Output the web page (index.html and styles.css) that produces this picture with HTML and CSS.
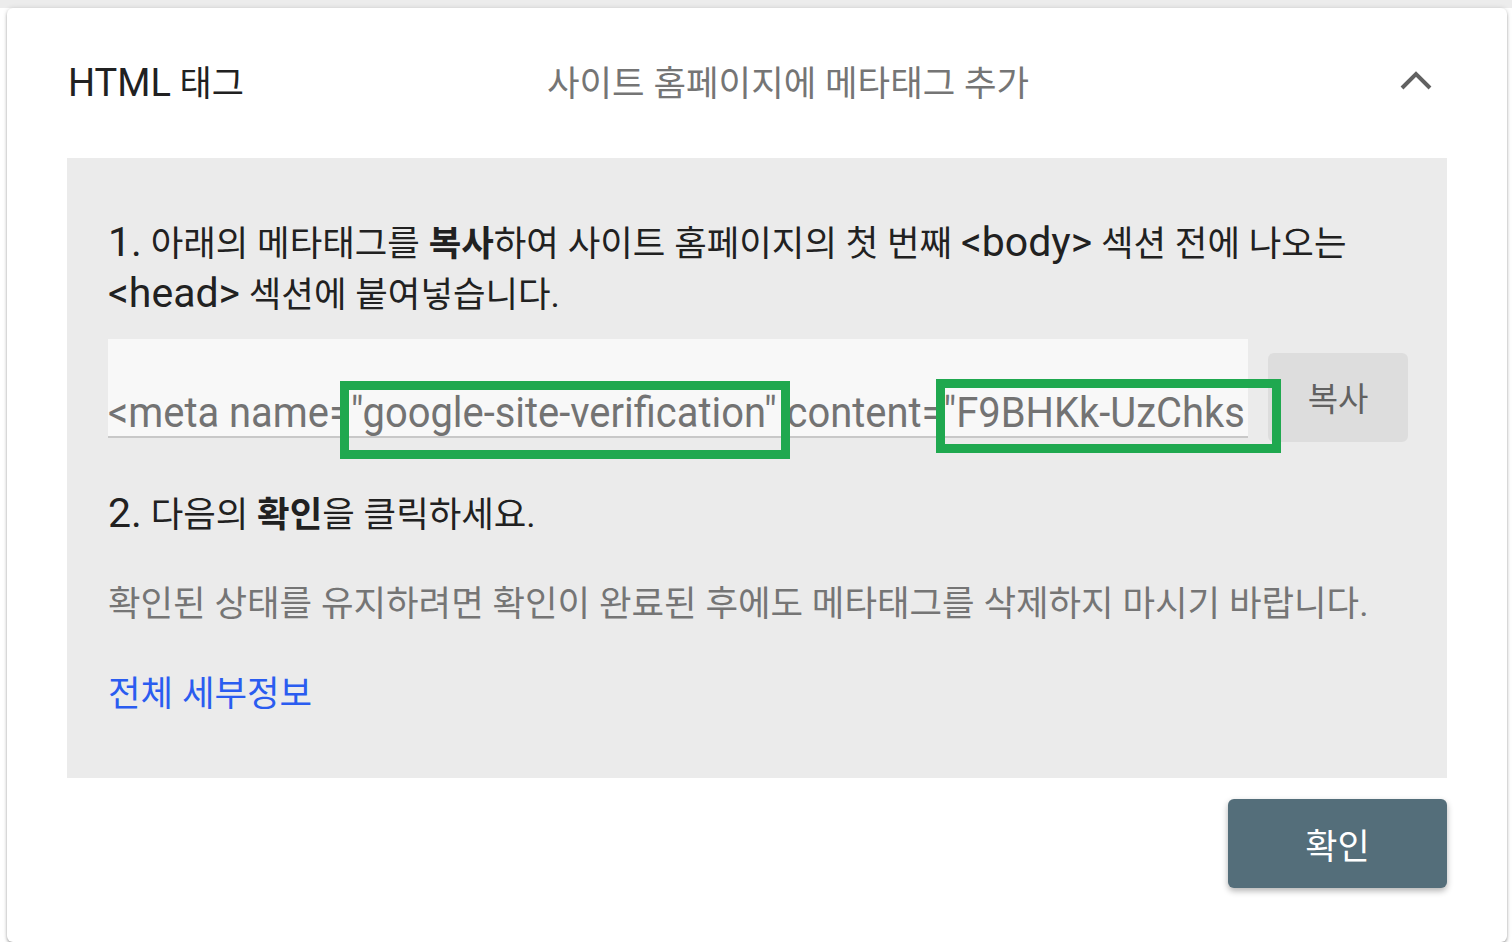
FILE: index.html
```html
<!DOCTYPE html>
<html lang="ko">
<head>
  <meta charset="UTF-8" />
  <meta name="viewport" content="width=device-width, initial-scale=1.0"/>
  <title>HTML 태그 - 소유권 확인</title>
  <link rel="stylesheet" href="styles.css">
</head>
<body>

<div class="card">
  <div class="card-head">
    <h2 class="title"><span class="lat">HTML</span> 태그</h2>
    <div class="subtitle">사이트 홈페이지에 메타태그 추가</div>
    <svg class="chevron" width="32" height="20" viewBox="0 0 32 20">
      <polyline points="2,17 16,3 30,17" fill="none" stroke="#616161" stroke-width="4" />
    </svg>
  </div>

  <div class="panel">
    <p class="step"><span class="lat">1.</span> 아래의 메타태그를 <b>복사</b>하여 사이트 홈페이지의 첫 번째 <span class="lat">&lt;body&gt;</span> 섹션 전에 나오는 <span class="lat">&lt;head&gt;</span> 섹션에 붙여넣습니다.</p>

    <div class="code-row">
      <div class="code-field">
        <span class="code-text">&lt;meta name="google-site-verification" content="F9BHKk-UzChks</span>
      </div>
      <button class="copy-btn">복사</button>
      <div class="mark mark-name"></div>
      <div class="mark mark-content"></div>
    </div>

    <p class="step step-two"><span class="lat">2.</span> 다음의 <b>확인</b>을 클릭하세요.</p>
    <p class="note">확인된 상태를 유지하려면 확인이 완료된 후에도 메타태그를 삭제하지 마시기 바랍니다.</p>
    <a class="more" href="#">전체 세부정보</a>
  </div>

  <div class="card-foot">
    <button class="confirm">확인</button>
  </div>
</div>

</body>
</html>
```

FILE: styles.css
```css
body {
  margin: 0;
  font-family: Roboto, "Noto Sans CJK KR", sans-serif;
  background: linear-gradient(#ececec, #ececec) top / 100% 8px no-repeat, #fff;
}
.card {
  width: 1500px;
  height: 934px;
  margin: 8px 0 0 7px;
  background: #fff;
  border-radius: 6px;
  box-shadow: 0 2px 3px rgba(0,0,0,0.3), 0 0 5px rgba(0,0,0,0.12);
  box-sizing: border-box;
}
.lat {
  font-size: 41px;
  line-height: 1;
}
.card-head {
  height: 150px;
  display: grid;
  grid-template-columns: 479px 1fr auto;
  align-items: center;
  padding: 0 75px 5px 61px;
  box-sizing: border-box;
}
.title {
  margin: 0;
  font-size: 35px;
  font-weight: 400;
  color: #212121;
}
.title .lat {
  font-size: 38px;
}
.subtitle {
  font-size: 35.4px;
  color: #757575;
}
.chevron {
  display: block;
}
.panel {
  margin: 0 60px;
  height: 620px;
  background: #ebebeb;
  padding: 61px 0 0 41px;
  box-sizing: border-box;
}
.step {
  margin: 0;
  font-size: 35.4px;
  line-height: 51px;
  color: #212121;
  max-width: 1310px;
}
.step b {
  font-weight: 700;
}
.code-row {
  position: relative;
  display: flex;
  align-items: flex-start;
  gap: 20px;
  margin-top: 18px;
  height: 103px;
}
.code-field {
  width: 1140px;
  height: 99px;
  background: #f8f8f8;
  border-bottom: 2px solid #c8c8c8;
  box-sizing: border-box;
  overflow: hidden;
  display: flex;
  align-items: flex-end;
  white-space: nowrap;
}
.code-text {
  display: inline-block;
  font-size: 42px;
  line-height: 56px;
  color: #737373;
  transform: scaleX(0.95);
  transform-origin: left bottom;
  margin-bottom: -5px;
}
.copy-btn {
  margin-top: 14px;
  width: 140px;
  height: 89px;
  border: none;
  border-radius: 6px;
  background: #dddddd;
  color: #616161;
  font-family: inherit;
  font-size: 33px;
  padding: 0 0 2px;
}
.mark {
  position: absolute;
  border: 9px solid #1fa84f;
  box-sizing: border-box;
}
.mark-name {
  left: 232px;
  top: 42px;
  width: 450px;
  height: 78px;
}
.mark-content {
  left: 828px;
  top: 40px;
  width: 345px;
  height: 74px;
}
.step-two {
  margin-top: 48px;
}
.note {
  margin: 38px 0 0;
  font-size: 35.4px;
  line-height: 51px;
  color: #757575;
}
.more {
  display: inline-block;
  margin-top: 39px;
  font-size: 35.4px;
  line-height: 51px;
  color: #2a5cf0;
  text-decoration: none;
}
.card-foot {
  display: flex;
  justify-content: flex-end;
  padding: 21px 60px 0;
}
.confirm {
  width: 219px;
  height: 89px;
  border: none;
  border-radius: 6px;
  background: #546e7a;
  color: #fff;
  font-family: inherit;
  font-size: 35px;
  box-shadow: 0 3px 6px rgba(0,0,0,0.3);
}
```
